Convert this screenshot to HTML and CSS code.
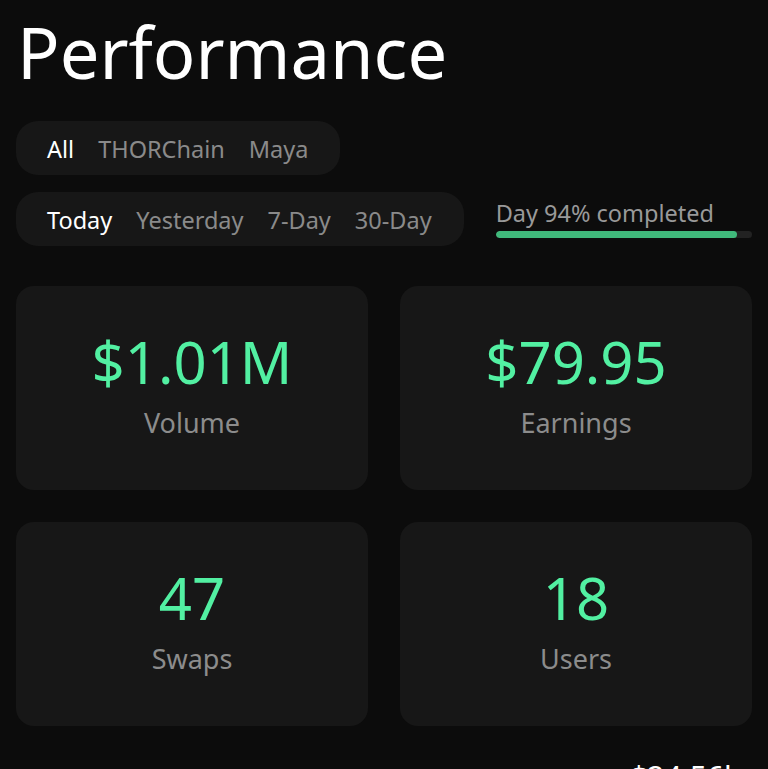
FILE: index.html
```html
<!DOCTYPE html>
<html>
<head>
  <title>Performance</title>
  <meta name="viewport" content="width=device-width, initial-scale=1">
  <link rel="stylesheet" href="styles.css">
</head>
<body>
  <div class="page">
    <h1 class="title">Performance</h1>

    <div class="filter-row">
      <div class="pill-group">
        <span class="pill-item active">All</span>
        <span class="pill-item">THORChain</span>
        <span class="pill-item">Maya</span>
      </div>
    </div>

    <div class="filter-row">
      <div class="pill-group">
        <span class="pill-item active">Today</span>
        <span class="pill-item">Yesterday</span>
        <span class="pill-item">7-Day</span>
        <span class="pill-item">30-Day</span>
      </div>
      <div class="day-progress">
        <div class="day-progress-label">Day 94% completed</div>
        <div class="day-progress-track">
          <div class="day-progress-fill" style="width: 94%"></div>
        </div>
      </div>
    </div>

    <div class="stats-grid">
      <div class="stat-card">
        <div class="stat-value">$1.01M</div>
        <div class="stat-label">Volume</div>
      </div>
      <div class="stat-card">
        <div class="stat-value">$79.95</div>
        <div class="stat-label">Earnings</div>
      </div>
      <div class="stat-card">
        <div class="stat-value">47</div>
        <div class="stat-label">Swaps</div>
      </div>
      <div class="stat-card">
        <div class="stat-value">18</div>
        <div class="stat-label">Users</div>
      </div>
    </div>

    <div class="next-section">
      <div class="next-total">$24.56k</div>
    </div>
  </div>
</body>
</html>
```

FILE: styles.css
```css
/* base */
html, body {
  margin: 0;
  background: #0c0c0c;
  color: #fff;
  font-family: "Noto Sans", "Open Sans", sans-serif;
}

.page {
  padding: 10px 16px 0;
}

/* title */
.title {
  margin: 0 0 27px 1px;
  font-size: 70.5px;
  font-weight: 400;
  line-height: 84px;
}

/* filter pills */
.filter-row {
  display: flex;
  align-items: center;
  gap: 32px;
  margin-bottom: 17px;
}

.pill-group {
  display: flex;
  align-items: center;
  gap: 24px;
  height: 54px;
  padding: 2px 32px 0 31px;
  box-sizing: border-box;
  background: #171717;
  border-radius: 22px;
}

.pill-item {
  font-size: 23.5px;
  line-height: 30px;
  color: #8a8a8a;
}

.pill-item.active {
  color: #fff;
}

/* day progress */
.day-progress {
  flex: 1;
  padding-bottom: 2px;
}

.day-progress-label {
  font-size: 23.5px;
  line-height: 28px;
  color: #999;
}

.day-progress-track {
  margin-top: 4px;
  height: 7px;
  background: #222;
  border-radius: 4px;
  overflow: hidden;
}

.day-progress-fill {
  height: 100%;
  background: #40b97b;
  border-radius: 4px;
}

/* stat cards */
.stats-grid {
  display: grid;
  grid-template-columns: 1fr 1fr;
  gap: 32px;
  margin-top: 40px;
}

.stat-card {
  height: 204px;
  box-sizing: border-box;
  padding-bottom: 9px;
  display: flex;
  flex-direction: column;
  align-items: center;
  justify-content: center;
  gap: 10px;
  background: #171717;
  border-radius: 18px;
}

.stat-value {
  font-size: 58px;
  line-height: 68px;
  color: #52f0a2;
}

.stat-label {
  font-size: 27px;
  line-height: 34px;
  color: #8c8c8c;
}

/* next section */
.next-section {
  margin-top: 31px;
  display: flex;
  justify-content: flex-end;
  padding-right: 12px;
}

.next-total {
  font-size: 30px;
  line-height: 40px;
}
```
